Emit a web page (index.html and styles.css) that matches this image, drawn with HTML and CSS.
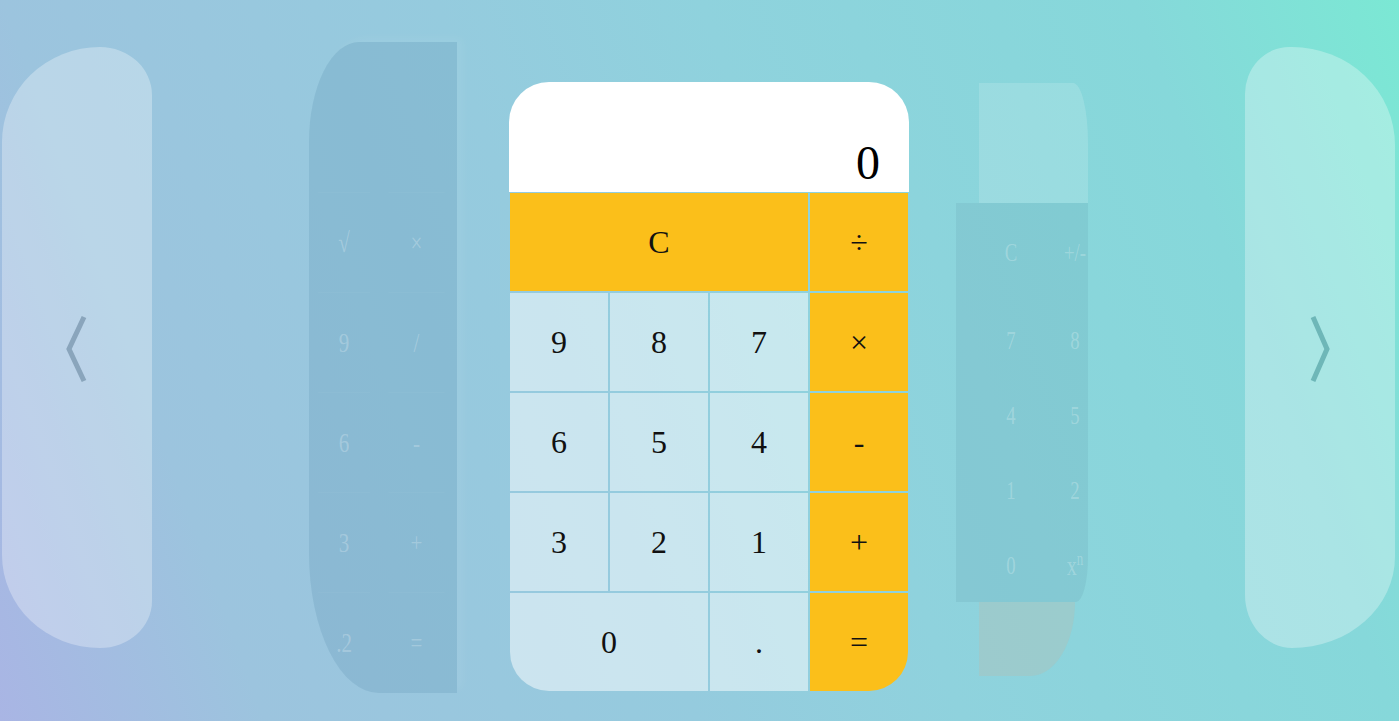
FILE: index.html
```html
<!DOCTYPE html>
<html lang="en">
<head>
<meta charset="utf-8">
<title>Calculator</title>
<link rel="stylesheet" href="styles.css">
</head>
<body>
<div class="page">
  <button class="nav nav-left" aria-label="Previous">
    <svg class="chev" width="24" height="72" viewBox="0 0 24 72"><polyline points="19,2 4,34 19,66" fill="none" stroke="#8aa5bc" stroke-width="5"/></svg>
  </button>

  <div class="stage">
    <div class="ghost ghost-left">
      <div class="g-display"></div>
      <div class="g-keys">
        <span>√</span><span>×</span>
        <span>9</span><span>/</span>
        <span>6</span><span>-</span>
        <span>3</span><span>+</span>
        <span>.2</span><span>=</span>
      </div>
    </div>

    <div class="ghost ghost-right">
      <div class="r-display"></div>
      <div class="r-keys">
        <span>C</span><span>+/-</span>
        <span>7</span><span>8</span>
        <span>4</span><span>5</span>
        <span>1</span><span>2</span>
        <span>0</span><span><em class="pow">x<sup>n</sup></em></span>
      </div>
      <div class="r-bottom"></div>
    </div>

    <div class="calc">
      <div class="display">0</div>
      <div class="keys">
        <button class="key op span3">C</button>
        <button class="key op">÷</button>
        <button class="key">9</button>
        <button class="key">8</button>
        <button class="key">7</button>
        <button class="key op">×</button>
        <button class="key">6</button>
        <button class="key">5</button>
        <button class="key">4</button>
        <button class="key op">-</button>
        <button class="key">3</button>
        <button class="key">2</button>
        <button class="key">1</button>
        <button class="key op">+</button>
        <button class="key span2 bl">0</button>
        <button class="key">.</button>
        <button class="key op br">=</button>
      </div>
    </div>
  </div>

  <button class="nav nav-right" aria-label="Next">
    <svg class="chev" width="24" height="72" viewBox="0 0 24 72"><polyline points="5,2 19,34 5,66" fill="none" stroke="#6eb7b8" stroke-width="5"/></svg>
  </button>
</div>
</body>
</html>
```

FILE: styles.css
```css
html, body {
  margin: 0;
  height: 100%;
}

body {
  background: linear-gradient(70deg, #a9b5e4 0%, #9cc4de 16%, #95cbde 42%, #8fd2dd 58%, #86d8da 84%, #7be8d4 100%);
  font-family: "Liberation Serif", "Times New Roman", serif;
  overflow: hidden;
}

.page {
  display: flex;
  align-items: flex-start;
  height: 100vh;
  box-sizing: border-box;
  padding: 47px 4px 0 2px;
}

.nav {
  flex: none;
  width: 150px;
  height: 601px;
  border: none;
  padding: 7px 0 0 0;
  margin: 0;
  background: rgba(255, 255, 255, 0.3);
  display: flex;
  align-items: center;
  justify-content: center;
  cursor: pointer;
}

.nav-left {
  border-radius: 98px 52px 52px 98px / 95px 48px 47px 93px;
}

.nav-right {
  border-radius: 45px 105px 105px 48px / 48px 100px 93px 54px;
}

.chev {
  display: block;
}

.stage {
  flex: 1;
  position: relative;
  display: flex;
  justify-content: center;
  padding-left: 21px;
  align-self: stretch;
}

/* faded side calculators */
.ghost {
  position: absolute;
  color: rgba(255, 255, 255, 0.24);
  font-size: 28px;
}

.ghost span {
  display: flex;
  align-items: center;
  justify-content: center;
}

.ghost-left {
  left: 157px;
  top: -5px;
  width: 148px;
  height: 651px;
  background: rgba(70, 125, 160, 0.18);
  border-radius: 50px 0 0 70px / 100px 0 0 140px;
  box-shadow: 6px -4px 8px rgba(255, 255, 255, 0.06);
  overflow: hidden;
}

.g-display {
  height: 150px;
}

.g-keys {
  display: grid;
  grid-template-columns: 70px 75px;
  grid-auto-rows: 100px;
}

.g-keys span {
  transform: scaleX(0.75);
  border-top: 1px solid rgba(255, 255, 255, 0.03);
}

.ghost-right {
  left: 804px;
  top: 36px;
  width: 132px;
  display: flex;
  flex-direction: column;
  font-size: 26px;
}

.r-display {
  margin-left: 23px;
  height: 120px;
  background: rgba(255, 255, 255, 0.15);
  border-radius: 0 15px 0 0 / 0 60px 0 0;
}

.r-keys {
  height: 399px;
  background: rgba(100, 160, 175, 0.2);
  border-radius: 0 0 12px 0 / 0 0 45px 0;
  display: grid;
  grid-template-columns: 64px 64px;
  grid-template-rows: 100px repeat(4, 75px);
  padding-left: 23px;
  overflow: hidden;
}

.r-keys span {
  transform: scaleX(0.72);
  white-space: nowrap;
}

.pow {
  font-style: normal;
  font-size: 28px;
}

.pow sup {
  font-size: 18px;
  line-height: 0;
  vertical-align: 0.55em;
}

.r-bottom {
  margin-left: 23px;
  width: 96px;
  height: 74px;
  background: rgba(200, 180, 160, 0.25);
  border-radius: 0 0 45px 0 / 0 0 75px 0;
}

/* main calculator */
.calc {
  position: relative;
  width: 400px;
  margin-top: 35px;
}

.display {
  height: 110px;
  box-sizing: border-box;
  background: #ffffff;
  border-radius: 40px 40px 0 0;
  display: flex;
  align-items: flex-end;
  justify-content: flex-end;
  padding: 0 29px 5px 0;
  font-size: 48px;
  line-height: 1;
  color: #000;
}

.keys {
  display: grid;
  grid-template-columns: repeat(4, 100px);
  grid-auto-rows: 100px;
}

.key {
  box-sizing: border-box;
  margin: 0;
  padding: 0;
  border: 1px solid transparent;
  background: rgba(255, 255, 255, 0.5);
  background-clip: padding-box;
  font-family: "Liberation Serif", "Times New Roman", serif;
  font-size: 32px;
  color: #111;
  cursor: pointer;
}

.key.op {
  background-color: #fbbf1a;
}

.span3 {
  grid-column: span 3;
}

.span2 {
  grid-column: span 2;
}

.bl {
  border-bottom-left-radius: 40px;
}

.br {
  border-bottom-right-radius: 40px;
}
```
